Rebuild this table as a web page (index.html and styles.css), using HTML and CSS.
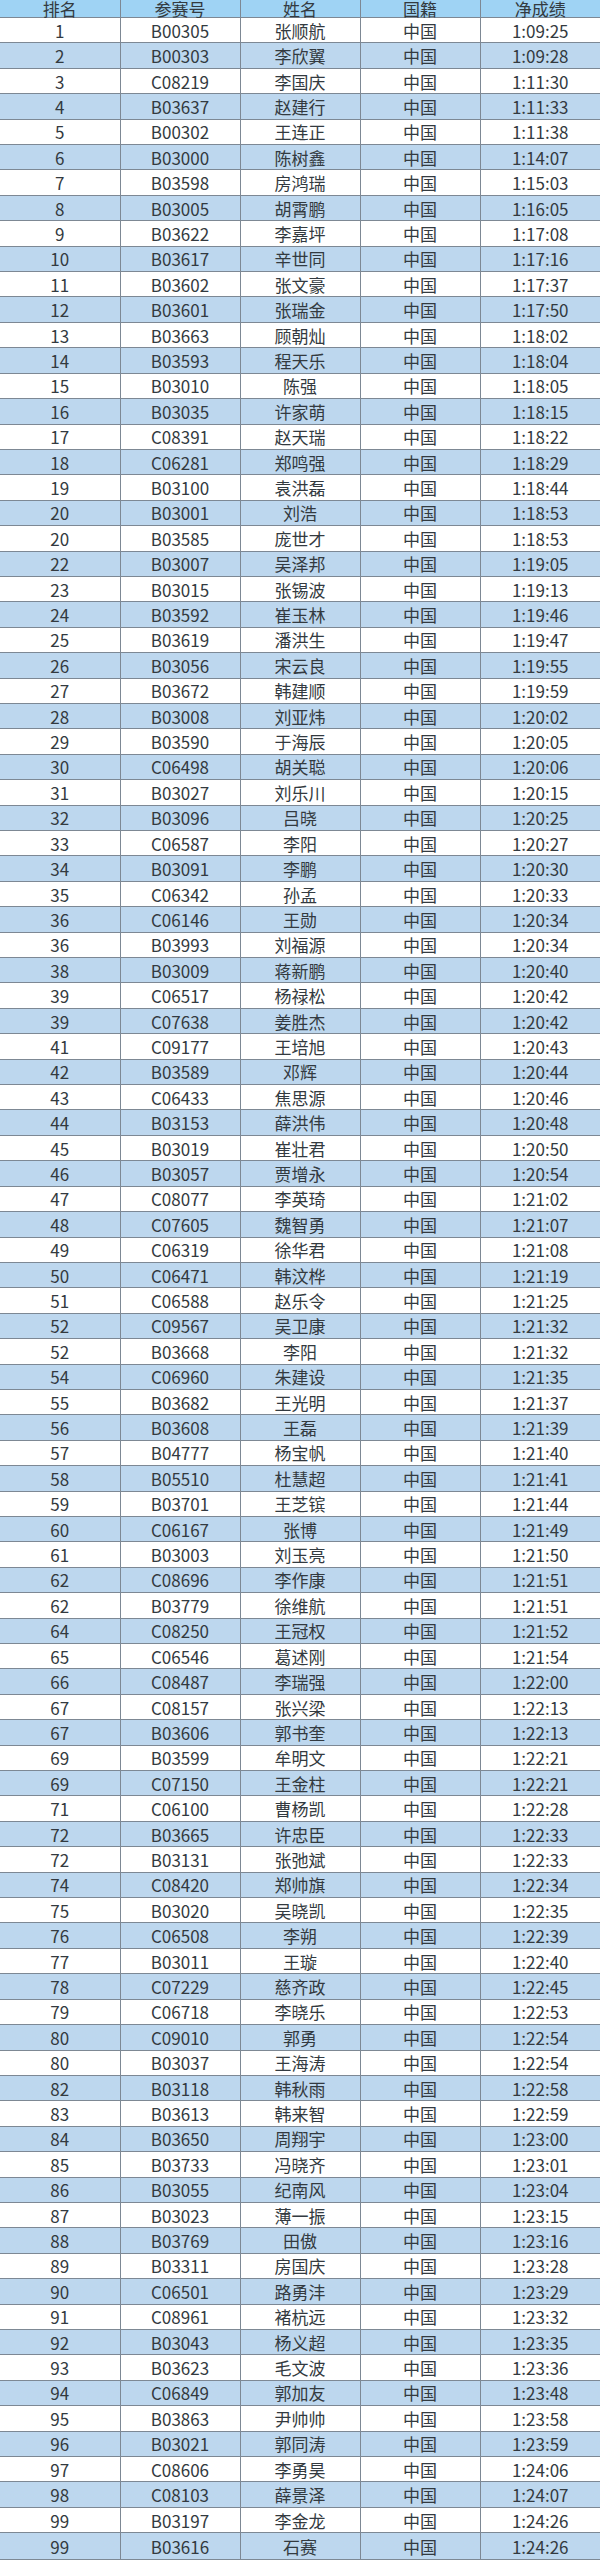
FILE: index.html
```html
<!DOCTYPE html>
<html lang="zh-CN">
<head>
<meta charset="utf-8">
<title>成绩表</title>
<link rel="stylesheet" href="styles.css">
</head>
<body>
<table class="results">
<thead>
<tr><th>排名</th><th>参赛号</th><th>姓名</th><th>国籍</th><th>净成绩</th></tr>
</thead>
<tbody>
<tr><td>1</td><td>B00305</td><td>张顺航</td><td>中国</td><td>1:09:25</td></tr>
<tr><td>2</td><td>B00303</td><td>李欣翼</td><td>中国</td><td>1:09:28</td></tr>
<tr><td>3</td><td>C08219</td><td>李国庆</td><td>中国</td><td>1:11:30</td></tr>
<tr><td>4</td><td>B03637</td><td>赵建行</td><td>中国</td><td>1:11:33</td></tr>
<tr><td>5</td><td>B00302</td><td>王连正</td><td>中国</td><td>1:11:38</td></tr>
<tr><td>6</td><td>B03000</td><td>陈树鑫</td><td>中国</td><td>1:14:07</td></tr>
<tr><td>7</td><td>B03598</td><td>房鸿瑞</td><td>中国</td><td>1:15:03</td></tr>
<tr><td>8</td><td>B03005</td><td>胡霄鹏</td><td>中国</td><td>1:16:05</td></tr>
<tr><td>9</td><td>B03622</td><td>李嘉坪</td><td>中国</td><td>1:17:08</td></tr>
<tr><td>10</td><td>B03617</td><td>辛世同</td><td>中国</td><td>1:17:16</td></tr>
<tr><td>11</td><td>B03602</td><td>张文豪</td><td>中国</td><td>1:17:37</td></tr>
<tr><td>12</td><td>B03601</td><td>张瑞金</td><td>中国</td><td>1:17:50</td></tr>
<tr><td>13</td><td>B03663</td><td>顾朝灿</td><td>中国</td><td>1:18:02</td></tr>
<tr><td>14</td><td>B03593</td><td>程天乐</td><td>中国</td><td>1:18:04</td></tr>
<tr><td>15</td><td>B03010</td><td>陈强</td><td>中国</td><td>1:18:05</td></tr>
<tr><td>16</td><td>B03035</td><td>许家萌</td><td>中国</td><td>1:18:15</td></tr>
<tr><td>17</td><td>C08391</td><td>赵天瑞</td><td>中国</td><td>1:18:22</td></tr>
<tr><td>18</td><td>C06281</td><td>郑鸣强</td><td>中国</td><td>1:18:29</td></tr>
<tr><td>19</td><td>B03100</td><td>袁洪磊</td><td>中国</td><td>1:18:44</td></tr>
<tr><td>20</td><td>B03001</td><td>刘浩</td><td>中国</td><td>1:18:53</td></tr>
<tr><td>20</td><td>B03585</td><td>庞世才</td><td>中国</td><td>1:18:53</td></tr>
<tr><td>22</td><td>B03007</td><td>吴泽邦</td><td>中国</td><td>1:19:05</td></tr>
<tr><td>23</td><td>B03015</td><td>张锡波</td><td>中国</td><td>1:19:13</td></tr>
<tr><td>24</td><td>B03592</td><td>崔玉林</td><td>中国</td><td>1:19:46</td></tr>
<tr><td>25</td><td>B03619</td><td>潘洪生</td><td>中国</td><td>1:19:47</td></tr>
<tr><td>26</td><td>B03056</td><td>宋云良</td><td>中国</td><td>1:19:55</td></tr>
<tr><td>27</td><td>B03672</td><td>韩建顺</td><td>中国</td><td>1:19:59</td></tr>
<tr><td>28</td><td>B03008</td><td>刘亚炜</td><td>中国</td><td>1:20:02</td></tr>
<tr><td>29</td><td>B03590</td><td>于海辰</td><td>中国</td><td>1:20:05</td></tr>
<tr><td>30</td><td>C06498</td><td>胡关聪</td><td>中国</td><td>1:20:06</td></tr>
<tr><td>31</td><td>B03027</td><td>刘乐川</td><td>中国</td><td>1:20:15</td></tr>
<tr><td>32</td><td>B03096</td><td>吕晓</td><td>中国</td><td>1:20:25</td></tr>
<tr><td>33</td><td>C06587</td><td>李阳</td><td>中国</td><td>1:20:27</td></tr>
<tr><td>34</td><td>B03091</td><td>李鹏</td><td>中国</td><td>1:20:30</td></tr>
<tr><td>35</td><td>C06342</td><td>孙孟</td><td>中国</td><td>1:20:33</td></tr>
<tr><td>36</td><td>C06146</td><td>王勋</td><td>中国</td><td>1:20:34</td></tr>
<tr><td>36</td><td>B03993</td><td>刘福源</td><td>中国</td><td>1:20:34</td></tr>
<tr><td>38</td><td>B03009</td><td>蒋新鹏</td><td>中国</td><td>1:20:40</td></tr>
<tr><td>39</td><td>C06517</td><td>杨禄松</td><td>中国</td><td>1:20:42</td></tr>
<tr><td>39</td><td>C07638</td><td>姜胜杰</td><td>中国</td><td>1:20:42</td></tr>
<tr><td>41</td><td>C09177</td><td>王培旭</td><td>中国</td><td>1:20:43</td></tr>
<tr><td>42</td><td>B03589</td><td>邓辉</td><td>中国</td><td>1:20:44</td></tr>
<tr><td>43</td><td>C06433</td><td>焦思源</td><td>中国</td><td>1:20:46</td></tr>
<tr><td>44</td><td>B03153</td><td>薛洪伟</td><td>中国</td><td>1:20:48</td></tr>
<tr><td>45</td><td>B03019</td><td>崔壮君</td><td>中国</td><td>1:20:50</td></tr>
<tr><td>46</td><td>B03057</td><td>贾增永</td><td>中国</td><td>1:20:54</td></tr>
<tr><td>47</td><td>C08077</td><td>李英琦</td><td>中国</td><td>1:21:02</td></tr>
<tr><td>48</td><td>C07605</td><td>魏智勇</td><td>中国</td><td>1:21:07</td></tr>
<tr><td>49</td><td>C06319</td><td>徐华君</td><td>中国</td><td>1:21:08</td></tr>
<tr><td>50</td><td>C06471</td><td>韩汶桦</td><td>中国</td><td>1:21:19</td></tr>
<tr><td>51</td><td>C06588</td><td>赵乐令</td><td>中国</td><td>1:21:25</td></tr>
<tr><td>52</td><td>C09567</td><td>吴卫康</td><td>中国</td><td>1:21:32</td></tr>
<tr><td>52</td><td>B03668</td><td>李阳</td><td>中国</td><td>1:21:32</td></tr>
<tr><td>54</td><td>C06960</td><td>朱建设</td><td>中国</td><td>1:21:35</td></tr>
<tr><td>55</td><td>B03682</td><td>王光明</td><td>中国</td><td>1:21:37</td></tr>
<tr><td>56</td><td>B03608</td><td>王磊</td><td>中国</td><td>1:21:39</td></tr>
<tr><td>57</td><td>B04777</td><td>杨宝帆</td><td>中国</td><td>1:21:40</td></tr>
<tr><td>58</td><td>B05510</td><td>杜慧超</td><td>中国</td><td>1:21:41</td></tr>
<tr><td>59</td><td>B03701</td><td>王芝镔</td><td>中国</td><td>1:21:44</td></tr>
<tr><td>60</td><td>C06167</td><td>张博</td><td>中国</td><td>1:21:49</td></tr>
<tr><td>61</td><td>B03003</td><td>刘玉亮</td><td>中国</td><td>1:21:50</td></tr>
<tr><td>62</td><td>C08696</td><td>李作康</td><td>中国</td><td>1:21:51</td></tr>
<tr><td>62</td><td>B03779</td><td>徐维航</td><td>中国</td><td>1:21:51</td></tr>
<tr><td>64</td><td>C08250</td><td>王冠权</td><td>中国</td><td>1:21:52</td></tr>
<tr><td>65</td><td>C06546</td><td>葛述刚</td><td>中国</td><td>1:21:54</td></tr>
<tr><td>66</td><td>C08487</td><td>李瑞强</td><td>中国</td><td>1:22:00</td></tr>
<tr><td>67</td><td>C08157</td><td>张兴梁</td><td>中国</td><td>1:22:13</td></tr>
<tr><td>67</td><td>B03606</td><td>郭书奎</td><td>中国</td><td>1:22:13</td></tr>
<tr><td>69</td><td>B03599</td><td>牟明文</td><td>中国</td><td>1:22:21</td></tr>
<tr><td>69</td><td>C07150</td><td>王金柱</td><td>中国</td><td>1:22:21</td></tr>
<tr><td>71</td><td>C06100</td><td>曹杨凯</td><td>中国</td><td>1:22:28</td></tr>
<tr><td>72</td><td>B03665</td><td>许忠臣</td><td>中国</td><td>1:22:33</td></tr>
<tr><td>72</td><td>B03131</td><td>张弛斌</td><td>中国</td><td>1:22:33</td></tr>
<tr><td>74</td><td>C08420</td><td>郑帅旗</td><td>中国</td><td>1:22:34</td></tr>
<tr><td>75</td><td>B03020</td><td>吴晓凯</td><td>中国</td><td>1:22:35</td></tr>
<tr><td>76</td><td>C06508</td><td>李朔</td><td>中国</td><td>1:22:39</td></tr>
<tr><td>77</td><td>B03011</td><td>王璇</td><td>中国</td><td>1:22:40</td></tr>
<tr><td>78</td><td>C07229</td><td>慈齐政</td><td>中国</td><td>1:22:45</td></tr>
<tr><td>79</td><td>C06718</td><td>李晓乐</td><td>中国</td><td>1:22:53</td></tr>
<tr><td>80</td><td>C09010</td><td>郭勇</td><td>中国</td><td>1:22:54</td></tr>
<tr><td>80</td><td>B03037</td><td>王海涛</td><td>中国</td><td>1:22:54</td></tr>
<tr><td>82</td><td>B03118</td><td>韩秋雨</td><td>中国</td><td>1:22:58</td></tr>
<tr><td>83</td><td>B03613</td><td>韩来智</td><td>中国</td><td>1:22:59</td></tr>
<tr><td>84</td><td>B03650</td><td>周翔宇</td><td>中国</td><td>1:23:00</td></tr>
<tr><td>85</td><td>B03733</td><td>冯晓齐</td><td>中国</td><td>1:23:01</td></tr>
<tr><td>86</td><td>B03055</td><td>纪南风</td><td>中国</td><td>1:23:04</td></tr>
<tr><td>87</td><td>B03023</td><td>薄一振</td><td>中国</td><td>1:23:15</td></tr>
<tr><td>88</td><td>B03769</td><td>田傲</td><td>中国</td><td>1:23:16</td></tr>
<tr><td>89</td><td>B03311</td><td>房国庆</td><td>中国</td><td>1:23:28</td></tr>
<tr><td>90</td><td>C06501</td><td>路勇沣</td><td>中国</td><td>1:23:29</td></tr>
<tr><td>91</td><td>C08961</td><td>褚杭远</td><td>中国</td><td>1:23:32</td></tr>
<tr><td>92</td><td>B03043</td><td>杨义超</td><td>中国</td><td>1:23:35</td></tr>
<tr><td>93</td><td>B03623</td><td>毛文波</td><td>中国</td><td>1:23:36</td></tr>
<tr><td>94</td><td>C06849</td><td>郭加友</td><td>中国</td><td>1:23:48</td></tr>
<tr><td>95</td><td>B03863</td><td>尹帅帅</td><td>中国</td><td>1:23:58</td></tr>
<tr><td>96</td><td>B03021</td><td>郭同涛</td><td>中国</td><td>1:23:59</td></tr>
<tr><td>97</td><td>C08606</td><td>李勇昊</td><td>中国</td><td>1:24:06</td></tr>
<tr><td>98</td><td>C08103</td><td>薛景泽</td><td>中国</td><td>1:24:07</td></tr>
<tr><td>99</td><td>B03197</td><td>李金龙</td><td>中国</td><td>1:24:26</td></tr>
<tr><td>99</td><td>B03616</td><td>石赛</td><td>中国</td><td>1:24:26</td></tr>
</tbody>
</table>
</body>
</html>
```

FILE: styles.css
```css
html, body {
  margin: 0;
  padding: 0;
  background: #ffffff;
}

.results {
  width: 600px;
  height: 2560px;
  table-layout: fixed;
  border-collapse: collapse;
  font-family: "Noto Sans CJK SC", "Noto Sans", sans-serif;
  font-size: 17px;
  color: #333a40;
}

.results th,
.results td {
  padding: 0;
  line-height: 1;
  text-align: center;
  vertical-align: middle;
  font-weight: 400;
  border-right: 1px solid #7d8894;
  border-bottom: 1px solid #7d8894;
}

.results th:last-child,
.results td:last-child {
  border-right: none;
}

.results thead tr {
  background: #9fd3f4;
}

.results tbody tr:nth-child(odd) {
  background: #ffffff;
}

.results tbody tr:nth-child(even) {
  background: #bdd7ee;
}
```
